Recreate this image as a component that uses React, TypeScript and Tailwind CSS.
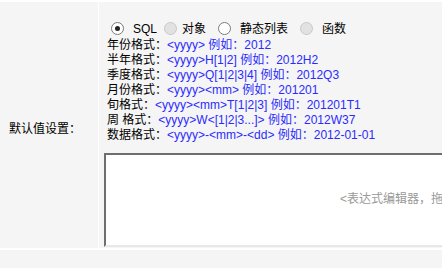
const lines: { label: string; value: string }[] = [
  { label: "年份格式：", value: "<yyyy> 例如：2012" },
  { label: "半年格式：", value: "<yyyy>H[1|2] 例如：2012H2" },
  { label: "季度格式：", value: "<yyyy>Q[1|2|3|4] 例如：2012Q3" },
  { label: "月份格式：", value: "<yyyy><mm> 例如：201201" },
  { label: "旬格式：", value: "<yyyy><mm>T[1|2|3] 例如：201201T1" },
  { label: "周 格式：", value: "<yyyy>W<[1|2|3...]> 例如：2012W37" },
  { label: "数据格式：", value: "<yyyy>-<mm>-<dd> 例如：2012-01-01" },
];

function Radio({ checked, disabled }: { checked?: boolean; disabled?: boolean }) {
  return (
    <span
      className={`flex h-[13px] w-[13px] shrink-0 items-center justify-center rounded-full border ${
        disabled ? "border-[#c8c8c8] bg-[#e2e2e2]" : "border-[#7a7a7a] bg-white"
      }`}
    >
      {checked && <span className="h-[5px] w-[5px] rounded-full bg-[#222]" />}
    </span>
  );
}

export default function App() {
  return (
    <div
      className="h-[268px] w-[442px] overflow-hidden border-t-2 border-white bg-[#f5f5f5] text-[12px] text-black"
      style={{ fontFamily: '"Liberation Sans", "Noto Sans CJK SC", sans-serif' }}
    >
      <div className="flex h-[246px]">
        {/* label cell */}
        <div className="flex w-[99px] shrink-0 items-center border-r border-white pl-[9px] pt-[8px]">
          默认值设置：
        </div>

        {/* value cell */}
        <div className="min-w-0 flex-1 pt-[19px]">
          <div className="flex h-[15px] items-center pl-[12px]">
            <Radio checked />
            <span className="ml-[9px] mr-[7px]">SQL</span>
            <Radio disabled />
            <span className="ml-[5px] mr-[12px]">对象</span>
            <Radio />
            <span className="ml-[9px] mr-[12px]">静态列表</span>
            <Radio disabled />
            <span className="ml-[9px]">函数</span>
          </div>

          <div className="mt-[2px] pl-[8px] leading-[15px]">
            {lines.map((l) => (
              <div key={l.label} className="whitespace-nowrap">
                <span>{l.label}</span>
                <span className="text-[#2b2bff]">{l.value}</span>
              </div>
            ))}
          </div>

          <div className="ml-[5px] mt-[10px] flex h-[94px] w-[600px] items-center border-2 border-b-[#e8e8e8] border-l-[#6e6e6e] border-r-[#e8e8e8] border-t-[#6e6e6e] bg-white pb-[2px] pl-[234px]">
            <span className="whitespace-nowrap text-[#999]">&lt;表达式编辑器，拖拽左侧字段至此处&gt;</span>
          </div>
        </div>
      </div>

      <div className="h-[20px] border-t-2 border-white" />
    </div>
  );
}
